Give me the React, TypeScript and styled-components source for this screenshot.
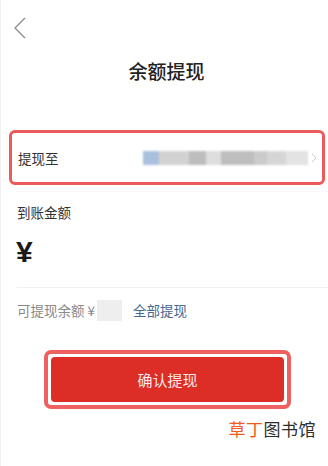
import React from "react";
import styled, {createGlobalStyle} from "styled-components";

const GlobalStyle = createGlobalStyle`
  html, body {
    margin: 0;
    padding: 0;
    background: #ffffff;
  }
  body {
    font-family: "Noto Sans CJK SC", "Noto Sans", sans-serif;
    color: #222;
  }
`

const mosaic = [
    {w: 16, c: "#a9c1dd"},
    {w: 30, c: "#d2d2d2"},
    {w: 17, c: "#bdbdbd"},
    {w: 15, c: "#dedede"},
    {w: 33, c: "#bebebe"},
    {w: 13, c: "#cbcbcb"},
    {w: 19, c: "#d6d6d6"},
    {w: 22, c: "#e3e3e3"},
]

const App: React.FC = () => {
    return (
        <Page>
            <GlobalStyle/>
            <TopBar>
                <BackButton viewBox="0 0 12 22">
                    <polyline points="11,1 1,11 11,21"/>
                </BackButton>
            </TopBar>
            <Title>余额提现</Title>

            <TargetRow>
                <RowLabel>提现至</RowLabel>
                <Account>
                    <Mosaic>
                        {mosaic.map((m, i) => <Tile key={i} $w={m.w} $c={m.c}/>)}
                    </Mosaic>
                    <Chevron viewBox="0 0 6 10">
                        <polyline points="1,1 5,5 1,9"/>
                    </Chevron>
                </Account>
            </TargetRow>
            <FaintLine/>

            <SectionLabel>到账金额</SectionLabel>
            <Yen>¥</Yen>
            <Divider/>

            <BalanceRow>
                <BalanceText>可提现余额 ¥</BalanceText>
                <HiddenValue/>
                <AllLink>全部提现</AllLink>
            </BalanceRow>

            <ButtonFrame>
                <ConfirmButton>确认提现</ConfirmButton>
            </ButtonFrame>

            <Watermark>
                <Orange>草丁</Orange>图书馆
            </Watermark>
        </Page>
    )
}

const Page = styled.div`
  position: relative;
  width: 328px;
  height: 466px;
  overflow: hidden;
  background: #fff;
  border-left: 1px solid #f0f0f0;
  box-sizing: border-box;
  display: flex;
  flex-direction: column;
`

const TopBar = styled.div`
  height: 50px;
  display: flex;
  align-items: flex-start;
  padding: 17px 0 0 13px;
  box-sizing: border-box;
`

const BackButton = styled.svg`
  width: 12px;
  height: 22px;
  fill: none;
  stroke: #8a8a8a;
  stroke-width: 1.3;
`

const Title = styled.div`
  margin-top: 8px;
  height: 26px;
  line-height: 26px;
  text-align: center;
  font-size: 19px;
  font-weight: 500;
  color: #222;
  padding-left: 4px;
`

const TargetRow = styled.div`
  margin: 46px 3px 0 8px;
  height: 55px;
  border: 3px solid #ec5b5b;
  border-radius: 6px;
  box-sizing: border-box;
  display: flex;
  align-items: center;
  justify-content: space-between;
  padding: 0 5px 0 6px;
`

const RowLabel = styled.span`
  font-size: 13.5px;
  color: #333;
`

const Account = styled.div`
  display: flex;
  align-items: center;
  gap: 3px;
`

const Mosaic = styled.div`
  display: flex;
  height: 14px;
  filter: blur(0.8px);
`

const Tile = styled.div<{ $w: number, $c: string }>`
  width: ${p => p.$w}px;
  height: 100%;
  background: ${p => p.$c};
`

const Chevron = styled.svg`
  width: 6px;
  height: 10px;
  fill: none;
  stroke: #cfcfcf;
  stroke-width: 1;
`

const FaintLine = styled.div`
  margin: 6px 0 0 16px;
  height: 1px;
  background: #f6f6f6;
`

const SectionLabel = styled.div`
  margin: 10px 0 0 16px;
  font-size: 13.5px;
  line-height: 20px;
  color: #333;
`

const Yen = styled.div`
  margin: 15px 0 0 15px;
  font-size: 30px;
  line-height: 30px;
  font-weight: 700;
  color: #1a1a1a;
  font-family: "Liberation Sans", "Noto Sans CJK SC", sans-serif;
`

const Divider = styled.div`
  margin: 20px 0 0 16px;
  height: 1px;
  background: #f1f1f1;
`

const BalanceRow = styled.div`
  margin: 11px 0 0 16px;
  height: 22px;
  display: flex;
  align-items: center;
`

const BalanceText = styled.span`
  font-size: 13.5px;
  color: #8a8a8a;
`

const HiddenValue = styled.div`
  width: 25px;
  height: 21px;
  background: #eeeeee;
  margin-left: 2px;
`

const AllLink = styled.span`
  margin-left: 11px;
  font-size: 13.5px;
  color: #48688e;
`

const ButtonFrame = styled.div`
  margin: 29px 0 0 43px;
  width: 247px;
  height: 59px;
  border: 4px solid #ef6161;
  border-radius: 7px;
  padding: 3px;
  box-sizing: border-box;
  display: flex;
`

const ConfirmButton = styled.button`
  flex: 1;
  border: none;
  border-radius: 4px;
  background: #dc2d26;
  color: #fbeaea;
  font-family: "Noto Sans CJK SC", sans-serif;
  font-size: 15px;
  padding: 0;
`

const Watermark = styled.div`
  align-self: flex-end;
  margin: 9px 12px 0 0;
  font-size: 17px;
  line-height: 22px;
  letter-spacing: 0.5px;
  color: #2e2e2e;
  font-family: "Noto Sans CJK SC", sans-serif;
`

const Orange = styled.span`
  color: #f05a1a;
`

export default App
